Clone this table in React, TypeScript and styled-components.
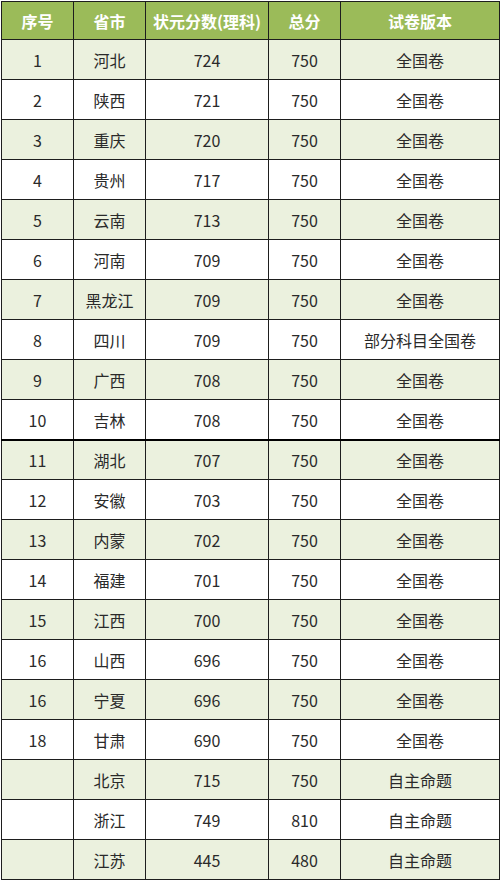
import { createGlobalStyle, styled } from "styled-components";

const GlobalStyle = createGlobalStyle`
  html, body {
    margin: 0;
    padding: 0;
    background: #ffffff;
  }
  body {
    font-family: "Noto Sans CJK SC", "Noto Sans", sans-serif;
  }
`;

const Page = styled.div`
  padding: 1px 0 0 1px;
`;

const Table = styled.table`
  border-collapse: collapse;
  table-layout: fixed;
  width: 498px;
  font-size: 16px;
  color: #2a2a2a;
`;

const HeadCell = styled.th<{ $w: number }>`
  box-sizing: border-box;
  width: ${(p) => p.$w}px;
  height: 38px;
  padding: 0;
  background-color: #9bbb59;
  color: #ffffff;
  font-weight: 700;
  font-size: 16px;
  text-align: center;
  border: 1px solid #1e1e1e;
`;

const Row = styled.tr<{ $shade: boolean; $thick?: boolean }>`
  background-color: ${(p) => (p.$shade ? "#ebf1de" : "#ffffff")};
  td {
    height: ${(p) => (p.$thick ? "38px" : "39px")};
    border-top: ${(p) => (p.$thick ? "2px solid #000" : "1px solid #1e1e1e")};
  }
`;

const Cell = styled.td`
  padding: 0;
  text-align: center;
  border: 1px solid #1e1e1e;
  line-height: 1;
`;

const widths = [72, 72, 123, 72, 159];
const headers = ["序号", "省市", "状元分数(理科)", "总分", "试卷版本"];

const rows: [string, string, number, number, string][] = [
  ["1", "河北", 724, 750, "全国卷"],
  ["2", "陕西", 721, 750, "全国卷"],
  ["3", "重庆", 720, 750, "全国卷"],
  ["4", "贵州", 717, 750, "全国卷"],
  ["5", "云南", 713, 750, "全国卷"],
  ["6", "河南", 709, 750, "全国卷"],
  ["7", "黑龙江", 709, 750, "全国卷"],
  ["8", "四川", 709, 750, "部分科目全国卷"],
  ["9", "广西", 708, 750, "全国卷"],
  ["10", "吉林", 708, 750, "全国卷"],
  ["11", "湖北", 707, 750, "全国卷"],
  ["12", "安徽", 703, 750, "全国卷"],
  ["13", "内蒙", 702, 750, "全国卷"],
  ["14", "福建", 701, 750, "全国卷"],
  ["15", "江西", 700, 750, "全国卷"],
  ["16", "山西", 696, 750, "全国卷"],
  ["16", "宁夏", 696, 750, "全国卷"],
  ["18", "甘肃", 690, 750, "全国卷"],
  ["", "北京", 715, 750, "自主命题"],
  ["", "浙江", 749, 810, "自主命题"],
  ["", "江苏", 445, 480, "自主命题"],
];

export default function App() {
  return (
    <>
      <GlobalStyle />
      <Page>
        <Table>
          <thead>
            <tr>
              {headers.map((h, i) => (
                <HeadCell key={h} $w={widths[i]}>
                  {h}
                </HeadCell>
              ))}
            </tr>
          </thead>
          <tbody>
            {rows.map((r, i) => (
              <Row key={i} $shade={i % 2 === 0} $thick={i === 10}>
                <Cell>{r[0]}</Cell>
                <Cell>{r[1]}</Cell>
                <Cell>{r[2]}</Cell>
                <Cell>{r[3]}</Cell>
                <Cell>{r[4]}</Cell>
              </Row>
            ))}
          </tbody>
        </Table>
      </Page>
    </>
  );
}
